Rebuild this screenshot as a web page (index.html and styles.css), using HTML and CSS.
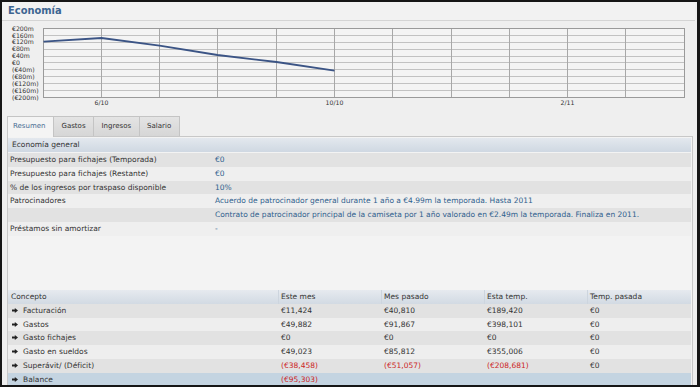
FILE: index.html
```html
<!DOCTYPE html>
<html lang="es">
<head>
    <meta charset="UTF-8">
    <title>Economía</title>
    <link rel="stylesheet" href="styles.css">
</head>
<body>

<div class="window">
    <div class="title">Economía</div>

    <svg class="chart" width="696" height="93" viewBox="0 0 696 93">
        <rect x="41.5" y="7.5" width="641" height="69" fill="#f4f4f4" stroke="#9a9a9a"/>
        <g stroke="#c2c2c2" stroke-width="1">
            <line x1="42" y1="14.5" x2="682" y2="14.5"/>
            <line x1="42" y1="21.5" x2="682" y2="21.5"/>
            <line x1="42" y1="28.5" x2="682" y2="28.5"/>
            <line x1="42" y1="35.5" x2="682" y2="35.5"/>
            <line x1="42" y1="41.5" x2="682" y2="41.5"/>
            <line x1="42" y1="48.5" x2="682" y2="48.5"/>
            <line x1="42" y1="55.5" x2="682" y2="55.5"/>
            <line x1="42" y1="62.5" x2="682" y2="62.5"/>
            <line x1="42" y1="69.5" x2="682" y2="69.5"/>
        </g>
        <g stroke="#a8a8a8" stroke-width="1">
            <line x1="99.5" y1="8" x2="99.5" y2="76"/>
            <line x1="157.5" y1="8" x2="157.5" y2="76"/>
            <line x1="215.5" y1="8" x2="215.5" y2="76"/>
            <line x1="274.5" y1="8" x2="274.5" y2="76"/>
            <line x1="332.5" y1="8" x2="332.5" y2="76"/>
            <line x1="390.5" y1="8" x2="390.5" y2="76"/>
            <line x1="449.5" y1="8" x2="449.5" y2="76"/>
            <line x1="507.5" y1="8" x2="507.5" y2="76"/>
            <line x1="565.5" y1="8" x2="565.5" y2="76"/>
            <line x1="623.5" y1="8" x2="623.5" y2="76"/>
        </g>
        <polyline points="41.5,20.7 99.5,17 157.5,24.7 215.5,34 274.5,41 332.5,49.7" fill="none" stroke="#3b5485" stroke-width="1.8" stroke-linejoin="round"/>
        <g class="axis">
            <text x="10" y="9.6">€200m</text>
            <text x="10" y="16.5">€160m</text>
            <text x="10" y="23.4">€120m</text>
            <text x="10" y="30.3">€80m</text>
            <text x="10" y="37.2">€40m</text>
            <text x="10" y="44.1">€0</text>
            <text x="10" y="51">(€40m)</text>
            <text x="10" y="57.9">(€80m)</text>
            <text x="10" y="64.8">(€120m)</text>
            <text x="10" y="71.7">(€160m)</text>
            <text x="10" y="78.6">(€200m)</text>
        </g>
        <g class="axis" text-anchor="middle">
            <text x="99.5" y="83.5">6/10</text>
            <text x="332.5" y="83.5">10/10</text>
            <text x="565.5" y="83.5">2/11</text>
        </g>
    </svg>

    <div class="tabs">
        <div class="tab active">Resumen</div>
        <div class="tab">Gastos</div>
        <div class="tab">Ingresos</div>
        <div class="tab">Salario</div>
    </div>

    <div class="panel">
        <div class="overview">
            <div class="head">Economía general</div>
            <div class="row dark"><span>Presupuesto para fichajes (Temporada)</span><span class="val">€0</span></div>
            <div class="row"><span>Presupuesto para fichajes (Restante)</span><span class="val">€0</span></div>
            <div class="row dark"><span>% de los ingresos por traspaso disponible</span><span class="val">10%</span></div>
            <div class="row"><span>Patrocinadores</span><span class="val">Acuerdo de patrocinador general durante 1 año a €4.99m la temporada. Hasta 2011</span></div>
            <div class="row dark"><span></span><span class="val">Contrato de patrocinador principal de la camiseta por 1 año valorado en €2.49m la temporada. Finaliza en 2011.</span></div>
            <div class="row"><span>Préstamos sin amortizar</span><span class="val">-</span></div>
        </div>

        <div class="summary">
            <div class="srow shead">
                <span>Concepto</span><span>Este mes</span><span>Mes pasado</span><span>Esta temp.</span><span>Temp. pasada</span>
            </div>
            <div class="srow dark">
                <span class="concept"><svg class="arrow" width="6" height="5" viewBox="0 0 6 5"><path d="M0 1.6h2.8V0L6 2.5 2.8 5V3.4H0z"/></svg>Facturación</span>
                <span>€11,424</span><span>€40,810</span><span>€189,420</span><span>€0</span>
            </div>
            <div class="srow">
                <span class="concept"><svg class="arrow" width="6" height="5" viewBox="0 0 6 5"><path d="M0 1.6h2.8V0L6 2.5 2.8 5V3.4H0z"/></svg>Gastos</span>
                <span>€49,882</span><span>€91,867</span><span>€398,101</span><span>€0</span>
            </div>
            <div class="srow dark">
                <span class="concept"><svg class="arrow" width="6" height="5" viewBox="0 0 6 5"><path d="M0 1.6h2.8V0L6 2.5 2.8 5V3.4H0z"/></svg>Gasto fichajes</span>
                <span>€0</span><span>€0</span><span>€0</span><span>€0</span>
            </div>
            <div class="srow">
                <span class="concept"><svg class="arrow" width="6" height="5" viewBox="0 0 6 5"><path d="M0 1.6h2.8V0L6 2.5 2.8 5V3.4H0z"/></svg>Gasto en sueldos</span>
                <span>€49,023</span><span>€85,812</span><span>€355,006</span><span>€0</span>
            </div>
            <div class="srow dark">
                <span class="concept"><svg class="arrow" width="6" height="5" viewBox="0 0 6 5"><path d="M0 1.6h2.8V0L6 2.5 2.8 5V3.4H0z"/></svg>Superávit/ (Déficit)</span>
                <span class="neg">(€38,458)</span><span class="neg">(€51,057)</span><span class="neg">(€208,681)</span><span>€0</span>
            </div>
            <div class="srow selected">
                <span class="concept"><svg class="arrow" width="6" height="5" viewBox="0 0 6 5"><path d="M0 1.6h2.8V0L6 2.5 2.8 5V3.4H0z"/></svg>Balance</span>
                <span class="neg">(€95,303)</span><span></span><span></span><span></span>
            </div>
        </div>
    </div>
</div>

</body>
</html>
```

FILE: styles.css
```css
body {
    margin: 0;
    font-family: 'DejaVu Sans', sans-serif;
    background: #111;
}
.window {
    width: 700px;
    height: 387px;
    box-sizing: border-box;
    border-style: solid;
    border-color: #161616;
    border-width: 2px 3px 2px 2px;
    background: #efefef;
    overflow: hidden;
}
.title {
    height: 18px;
    line-height: 17px;
    margin: 0 2px 0 0;
    padding-left: 6px;
    border-bottom: 1px solid #d4d4d4;
    font-family: 'DejaVu Sans Condensed', 'DejaVu Sans', sans-serif;
    font-weight: bold;
    font-size: 11px;
    color: #3d6591;
    background: #f2f2f2;
}
.chart {
    display: block;
}
.axis text {
    font-size: 6.2px;
    fill: #333;
}
.tabs {
    display: flex;
    margin: 2px 0 0 5px;
    height: 20px;
}
.tab {
    box-sizing: border-box;
    height: 20px;
    padding: 0 7.5px;
    line-height: 19px;
    font-size: 7px;
    color: #333;
    background: linear-gradient(#e4e4e4, #d6d6d6);
    border: 1px solid #c4c4c4;
    border-left: none;
    border-bottom: none;
}
.tab.active {
    height: 21px;
    margin-bottom: -1px;
    position: relative;
    color: #4a6d93;
    background: #f4f4f4;
    border-left: 1px solid #c8c8c8;
    padding: 0 6px 0 5px;
    width: 47px;
}
.panel {
    margin-left: 5px;
    width: 686px;
    height: 260px;
    box-sizing: border-box;
    border: 1px solid #c8c8c8;
    background: #f3f3f3;
    padding: 1px 1px 0 0;
    font-size: 7.5px;
    color: #333;
}
.head {
    height: 14px;
    line-height: 14px;
    margin-bottom: 1px;
    padding-left: 4px;
    background: linear-gradient(#e3e8ee, #cfd8e2);
}
.row {
    display: grid;
    grid-template-columns: 205px 1fr;
    height: 13.8px;
    line-height: 13.8px;
    padding-left: 2px;
    background: #efefef;
    white-space: nowrap;
}
.dark {
    background: #e2e2e2;
}
.val {
    color: #2f5f8e;
}
.summary {
    margin-top: 54px;
}
.srow {
    display: grid;
    grid-template-columns: 270px 103px 103px 103px 103px;
    height: 13.8px;
    line-height: 13.8px;
    background: #eeeeee;
    white-space: nowrap;
}
.srow.dark {
    background: #e2e2e2;
}
.srow span {
    padding-left: 3px;
}
.srow .concept {
    padding-left: 4px;
}
.shead {
    height: 14px;
    line-height: 14px;
    background: linear-gradient(#e6eaef, #d2dae3);
}
.shead span + span {
    border-left: 1px solid #cdd5de;
    padding-left: 2px;
}
.srow.selected {
    background: #c4d4e1;
}
.arrow {
    fill: #222;
    margin-right: 5px;
    vertical-align: 0;
}
.neg {
    color: #cc2424;
}
```
